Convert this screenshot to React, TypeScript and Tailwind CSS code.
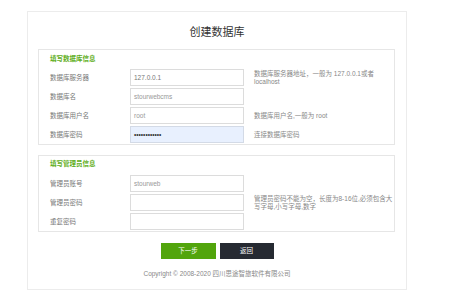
const dbFields = [
  {
    label: '数据库服务器',
    value: '127.0.0.1',
    tip: '数据库服务器地址，一般为 127.0.0.1或者localhost',
    tone: 'text-[#777]',
  },
  { label: '数据库名', value: 'stourwebcms', tip: '', tone: 'text-[#999]' },
  { label: '数据库用户名', value: 'root', tip: '数据库用户名,一般为 root', tone: 'text-[#999]' },
  { label: '数据库密码', value: '••••••••••••', tip: '连接数据库密码', tone: 'text-[#333]', autofill: true },
];

const adminFields = [
  { label: '管理员账号', value: 'stourweb', tip: '', tone: 'text-[#999]' },
  {
    label: '管理员密码',
    value: '',
    tip: '管理员密码不能为空，长度为8-16位,必须包含大写字母,小写字母,数字',
    tone: 'text-[#999]',
  },
  { label: '重复密码', value: '', tip: '', tone: 'text-[#999]' },
];

type Field = {
  label: string;
  value: string;
  tip: string;
  tone: string;
  autofill?: boolean;
};

function FieldRow({ field }: { field: Field }) {
  return (
    <div className="flex items-center h-[17px]">
      <div className="w-[81px] text-[6.5px] leading-[8px] text-[#777]">{field.label}</div>
      <div
        className={`w-[114px] h-[17px] shrink-0 border flex items-center px-[3px] text-[6.5px] ${field.tone} ${
          field.autofill ? 'bg-[#e8f0fe] border-[#d3dae6]' : 'bg-white border-[#dcdcdc]'
        }`}
      >
        {field.value}
      </div>
      <div className="ml-[10px] w-[140px] shrink-0 text-[6.5px] leading-[8px] text-[#888]">{field.tip}</div>
    </div>
  );
}

function Section({ title, fields, top }: { title: string; fields: Field[]; top: string }) {
  return (
    <div className={`w-[357px] border border-[#e6e6e6] pl-[11px] pb-[1px] ${top}`}>
      <p className="text-[6.5px] leading-[8px] font-bold text-[#5fae1b]">{title}</p>
      <div className="flex flex-col gap-[2px]">
        {fields.map((f) => (
          <FieldRow key={f.label} field={f} />
        ))}
      </div>
    </div>
  );
}

export default function App() {
  return (
    <div className="w-[454px] h-[302px] bg-white overflow-hidden font-['Liberation_Sans','Noto_Sans_CJK_SC',sans-serif]">
      <div className="ml-[27px] mt-[11px] w-[380px] border border-[#ececec] pl-[10px] pb-[11px]">
        <h1 className="pt-[13px] mb-[10px] text-center text-[11px] leading-[14px] text-[#333] pr-[10px]">
          创建数据库
        </h1>

        {/* 数据库 */}
        <Section title="填写数据库信息" fields={dbFields} top="pt-[5px] [&>p]:mb-[6px]" />

        {/* 管理员 */}
        <div className="mt-[10px]">
          <Section title="填写管理员信息" fields={adminFields} top="pt-[4px] [&>p]:mb-[7px]" />
        </div>

        <div className="mt-[11px] flex justify-center gap-[4px] pr-[10px]">
          <button className="w-[55px] h-[16px] bg-[#52a50c] text-white text-[6.5px] leading-[16px]">下一步</button>
          <button className="w-[54px] h-[16px] bg-[#262a32] text-white text-[6.5px] leading-[16px]">返回</button>
        </div>

        <p className="mt-[11px] text-center text-[6.5px] leading-[8px] text-[#888] pr-[10px]">
          Copyright © 2008-2020 四川思途智旅软件有限公司
        </p>
      </div>
    </div>
  );
}
